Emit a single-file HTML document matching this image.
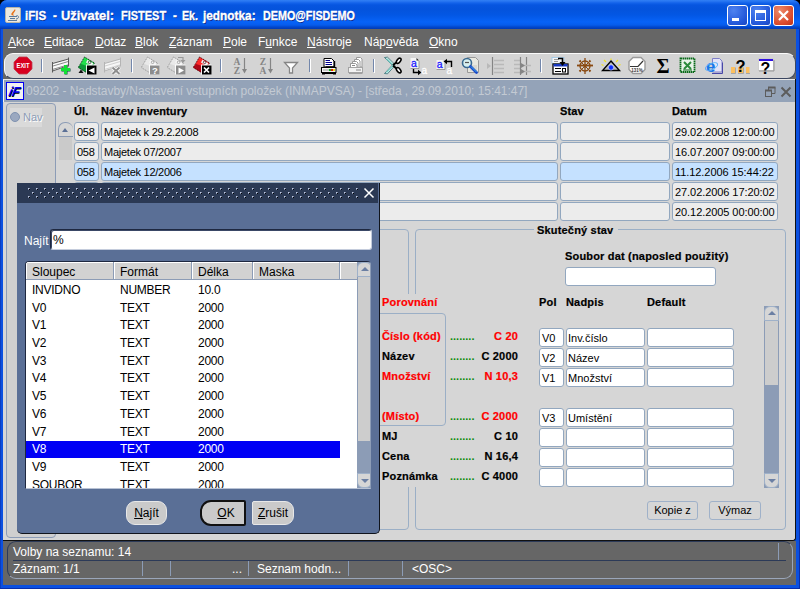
<!DOCTYPE html>
<html><head><meta charset="utf-8">
<style>
*{box-sizing:border-box;margin:0;padding:0}
html,body{width:800px;height:589px;overflow:hidden;background:#000;font-family:"Liberation Sans",sans-serif;font-size:11px;color:#000}
div,span{position:absolute;white-space:nowrap}
#win{left:0;top:0;width:800px;height:589px;background:#0b50e0;border-radius:7px 7px 0 0;overflow:hidden;box-shadow:inset -1px -1px 0 #0a2ea8,inset 1px 0 0 #0a3cc0}
#title{left:0;top:0;width:800px;height:29px;background:linear-gradient(#2f7ff5 0,#2a78f2 1px,#1262ea 3px,#0655e0 5px,#0453dc 9px,#0357e4 15px,#0763f8 22px,#065cec 25px,#0347cc 27px,#013ab4 29px);border-radius:7px 7px 0 0}
#title .tw{top:8px;color:#fff;font-weight:bold;font-size:13.5px;line-height:16px;text-shadow:1px 1px 0 #0a2a8a;-webkit-text-stroke:0.35px #fff;transform-origin:0 0}
.wb{top:5px;width:21px;height:21px;border:1px solid #fff;border-radius:3px;background:radial-gradient(circle at 30% 25%,#4f83f0,#2256d8 70%,#1a46c0)}
.wb.cl{background:radial-gradient(circle at 30% 25%,#ee8a6a,#d8482a 70%,#b83418)}
#menubar{left:3px;top:29px;width:793px;height:24px;background:#666}
#menubar span{top:6px;color:#fff;font-size:12px}
#toolbar{left:3px;top:53px;width:793px;height:26px;background:#666}
#toolbar .in{left:1px;top:0;width:792px;height:26px;background:#d4d4d4;border:1px solid #fafafa;border-right-color:#3a4660;border-bottom-color:#3a4660;border-radius:9px}
#mdi{left:3px;top:79px;width:793px;height:462px;background:#d6d6d6;border-right:1px solid #111;border-bottom:1px solid #111;border-radius:0 0 3px 0}
#mdit{left:0;top:0;width:792px;height:23px;background:#94a3b8;border-top:1px solid #e8e8e8;border-left:1px solid #f4f4f4}
#mdit .txt{left:22px;top:4px;color:#c3cad3;font-size:12px;letter-spacing:-0.04px}
#status{left:3px;top:541px;width:793px;height:44px;background:#666}
#status span{color:#fff;font-size:12px}
.hd{font-weight:bold;font-size:11px;letter-spacing:0.13px;-webkit-text-stroke:0.25px #000;margin-top:1px}
.f{background:#ececec;border:1px solid #92a7bf;border-radius:3px;height:19px;font-size:11px;line-height:19px;padding-left:2px;overflow:hidden;letter-spacing:-0.25px}
.f.sel{background:#c5e1ff}
.w{background:#fff;border:1px solid #92a7bf;border-radius:3px;height:19px;font-size:11px;line-height:19px;padding-left:2px;overflow:hidden}
.lb{font-weight:bold;font-size:11px;letter-spacing:0.18px;-webkit-text-stroke:0.2px}
.red{color:#f00}
.dots{color:#0a8a0a;font-weight:bold;font-size:11px;letter-spacing:0px}
.btn{background:#d6d6d6;border:1px solid #9fb1c9;border-radius:3px;height:19px;font-size:11px;line-height:17px;text-align:center}
#dlg{width:363px;height:351px;background:#5a6f96;border-radius:0 0 5px 5px;border-right:1px solid #10141c;border-bottom:1px solid #10141c}
#dlgt{left:0;top:0;width:361px;height:20px;background:#2b3954}
#list{left:8px;top:78px;width:346px;height:228px;background:#fff;border:1px solid #1e2840;border-right-color:#8c9cb6;border-bottom-color:#b8c2d4;border-radius:4px 4px 0 0;overflow:hidden}
#list .h{left:0;top:0;height:18px;background:#d2d2d2;border-right:1px solid #8c9cb6;border-bottom:1px solid #8c9cb6;font-size:12px;line-height:20px;padding-left:6px;box-shadow:inset 1px 1px 0 #fff}
#list .r{left:0;width:314px;height:17px;font-size:12px;letter-spacing:-0.25px}
#list .r span{top:1px}
#list .r.s{background:#0000f5;color:#fff}
.db{top:318px;height:24px;background:#cacaca;font-size:12px;line-height:22px;text-align:center;border:1px solid #e8e8e8}
</style></head><body>
<div id="win">
<div id="title"><span class="tw" style="left:25px;transform:scaleX(0.857)">iFIS</span><span class="tw" style="left:53px;transform:scaleX(0.857)">-</span><span class="tw" style="left:60.5px;transform:scaleX(0.955)">Uživatel:</span><span class="tw" style="left:120.6px;transform:scaleX(0.813)">FISTEST</span><span class="tw" style="left:173px;transform:scaleX(0.857)">-</span><span class="tw" style="left:181.6px;transform:scaleX(0.790)">Ek.</span><span class="tw" style="left:203px;transform:scaleX(0.876)">jednotka:</span><span class="tw" style="left:263px;transform:scaleX(0.798)">DEMO@FISDEMO</span><svg style="position:absolute;left:5px;top:7px" width="16" height="16" viewBox="5 7 16 16"><rect x="5.500" y="7.500" width="15" height="15" rx="1.500" fill="#ebe8e0" stroke="#b8b4a8" stroke-width="1"/><path d="M13.500 15.500c-2.500-1.500 1-4 1.500-5.500M12 15c-1.500-2 2.500-3 3-5.500" fill="none" stroke="#e8741c" stroke-width="1.100"/><path d="M9 16.500h8M10 18.500h5M8 20.500h9" stroke="#5a7a9c" stroke-width="1"/><path d="M16.500 15.500c3 0 2.500 3.500-0.500 3.500" fill="none" stroke="#5a7a9c" stroke-width="1"/></svg><div class="wb" style="left:727px"><svg width="19" height="19" style="position:absolute;left:0;top:0"><rect x="4" y="12" width="7" height="3" fill="#fff"/></svg></div><div class="wb" style="left:750px"><svg width="19" height="19" style="position:absolute;left:0;top:0"><rect x="4.500" y="5.500" width="10" height="9" fill="none" stroke="#fff" stroke-width="1"/><rect x="4" y="4" width="11" height="3" fill="#fff"/></svg></div><div class="wb cl" style="left:773px"><svg width="19" height="19" style="position:absolute;left:0;top:0"><path d="M5 5l9 9M14 5l-9 9" stroke="#fff" stroke-width="2.200"/></svg></div></div>
<div id="menubar"><span style="left:5px"><u>A</u>kce</span><span style="left:41px"><u>E</u>ditace</span><span style="left:92px"><u>D</u>otaz</span><span style="left:132px"><u>B</u>lok</span><span style="left:166px"><u>Z</u>áznam</span><span style="left:220px"><u>P</u>ole</span><span style="left:255px">F<u>u</u>nkce</span><span style="left:304px"><u>N</u>ástroje</span><span style="left:361px">Náp<u>o</u>věda</span><span style="left:426px"><u>O</u>kno</span></div>
<div id="toolbar"><div class="in"></div><svg style="position:absolute;left:10px;top:3px" width="20" height="19" viewBox="13 56 20 19"><polygon points="19,57 27,57 32,62 32,69 27,74 19,74 14,69 14,62" fill="#d8001f" stroke="#c04050" stroke-width="0.8"/><text x="23" y="68.2" text-anchor="middle" font-family="Liberation Sans,sans-serif" font-weight="bold" font-size="6.4" fill="#fff" textLength="13" lengthAdjust="spacingAndGlyphs">EXIT</text></svg><div style="left:38px;top:6px;width:1px;height:13px;background:#7387ab"></div><div style="left:39px;top:6px;width:1px;height:14px;background:#fff"></div><svg style="position:absolute;left:48px;top:3px" width="21" height="19" viewBox="51 56 21 19"><polygon points="52.5,63.5 68.5,59 68.5,65.5 52.5,71" fill="#fafafa" stroke="#5a5a5a" stroke-width="1"/><path d="M53 66l15-4.400M53 69.3l15-4.400" stroke="#8a8a8a" stroke-width="1"/><line x1="68.5" y1="57.5" x2="68.5" y2="66.5" stroke="#5a5a5a" stroke-width="1"/><line x1="52.5" y1="62" x2="52.5" y2="72.5" stroke="#5a5a5a" stroke-width="1"/><path d="M64.500 65.500h3v3h3v3h-3v3h-3v-3h-3v-3h3z" fill="#064a3a"/><path d="M64 65h3v3h3v3h-3v3h-3v-3h-3v-3h3z" fill="#12e034"/></svg><svg style="position:absolute;left:75px;top:15px" width="8" height="6" viewBox="78 68 8 6"><polygon points="78.500,73 81,69.500 83.500,73" fill="#111"/></svg><svg style="position:absolute;left:75px;top:2px" width="20" height="21" viewBox="78 55 20 21"><polygon points="84.5,57 94.5,63 88,73.5 78.3,67.5" fill="#22e04c"/><polygon points="81.2,64 87,66 91,68.5 88,73.5 78.3,67.5" fill="#0f9a3a"/><polygon points="84.5,57 94.5,63 88,73.5 78.3,67.5" fill="none" stroke="#052a10" stroke-width="0.9" stroke-dasharray="1.2 0.8"/><polygon points="87.5,59.8 93.3,63.2 91.5,66 86,62.6" fill="#f4f4f4"/><circle cx="89.6" cy="62.3" r="1.3" fill="none" stroke="#052a10" stroke-width="0.7"/><rect x="86" y="64.5" width="10.5" height="10" fill="#fff" opacity="0.9"/><rect x="87" y="65.5" width="9.5" height="9" fill="#000"/><polygon points="94.500,67.500 94.500,73.500 88.500,70.500" fill="#fff"/></svg><svg style="position:absolute;left:100px;top:3px" width="21" height="19" viewBox="103 56 21 19"><polygon points="104.5,63.5 120.5,59 120.5,65.5 104.5,71" fill="#f6f6f6" stroke="#b4b4b4" stroke-width="1"/><path d="M105 66l15-4.400M105 69.3l15-4.400" stroke="#d0d0d0" stroke-width="1"/><line x1="120.5" y1="57.5" x2="120.5" y2="66.5" stroke="#b4b4b4" stroke-width="1"/><line x1="104.5" y1="62" x2="104.5" y2="72.5" stroke="#b4b4b4" stroke-width="1"/><path d="M112.500 67.500l7 6.500M119.500 67.500l-7 6.500" stroke="#fff" stroke-width="3.400"/><path d="M112.500 67.500l7 6.500M119.500 67.500l-7 6.500" stroke="#8e8e8e" stroke-width="2"/></svg><div style="left:128px;top:6px;width:1px;height:13px;background:#7387ab"></div><div style="left:129px;top:6px;width:1px;height:14px;background:#fff"></div><svg style="position:absolute;left:138px;top:2px" width="20" height="21" viewBox="141 55 20 21"><polygon points="147.5,57 157.5,63 151,73.5 141.3,67.5" fill="#e9e9e9"/><polygon points="144.2,64 150,66 154,68.5 151,73.5 141.3,67.5" fill="#d8d8d8"/><polygon points="147.5,57 157.5,63 151,73.5 141.3,67.5" fill="none" stroke="#8f8f8f" stroke-width="0.9" stroke-dasharray="1.2 0.8"/><polygon points="150.5,59.8 156.3,63.2 154.5,66 149,62.6" fill="#f4f4f4"/><circle cx="152.6" cy="62.3" r="1.3" fill="none" stroke="#8f8f8f" stroke-width="0.7"/><rect x="149" y="64.5" width="10.5" height="10" fill="#fff" opacity="0.9"/><rect x="150" y="65.5" width="9.5" height="9" fill="#8c8c8c"/><text x="154.800" y="73.600" text-anchor="middle" font-family="Liberation Sans,sans-serif" font-weight="bold" font-size="9.500" fill="#fff">?</text></svg><svg style="position:absolute;left:164px;top:2px" width="20" height="21" viewBox="167 55 20 21"><polygon points="173.5,57 183.5,63 177,73.5 167.3,67.5" fill="#e9e9e9"/><polygon points="170.2,64 176,66 180,68.5 177,73.5 167.3,67.5" fill="#d8d8d8"/><polygon points="173.5,57 183.5,63 177,73.5 167.3,67.5" fill="none" stroke="#8f8f8f" stroke-width="0.9" stroke-dasharray="1.2 0.8"/><polygon points="176.5,59.8 182.3,63.2 180.5,66 175,62.6" fill="#f4f4f4"/><circle cx="178.6" cy="62.3" r="1.3" fill="none" stroke="#8f8f8f" stroke-width="0.7"/><rect x="175" y="64.5" width="10.5" height="10" fill="#fff" opacity="0.9"/><rect x="176" y="65.5" width="9.5" height="9" fill="#8c8c8c"/><polygon points="178.500,67.500 178.500,73.500 184,70.500" fill="#fff"/><path d="M178 57.500h5v3" fill="none" stroke="#9a9a9a" stroke-width="1.200"/><polygon points="180.500,60 185.500,60 183,63" fill="#9a9a9a"/></svg><svg style="position:absolute;left:190px;top:2px" width="20" height="21" viewBox="193 55 20 21"><polygon points="199.5,57 209.5,63 203,73.5 193.3,67.5" fill="#ff2a2a"/><polygon points="196.2,64 202,66 206,68.5 203,73.5 193.3,67.5" fill="#b00818"/><polygon points="199.5,57 209.5,63 203,73.5 193.3,67.5" fill="none" stroke="#400008" stroke-width="0.9" stroke-dasharray="1.2 0.8"/><polygon points="202.5,59.8 208.3,63.2 206.5,66 201,62.6" fill="#f4f4f4"/><circle cx="204.6" cy="62.3" r="1.3" fill="none" stroke="#400008" stroke-width="0.7"/><rect x="201" y="64.5" width="10.5" height="10" fill="#fff" opacity="0.9"/><rect x="202" y="65.5" width="9.5" height="9" fill="#000"/><path d="M204 67.500l5 5M209 67.500l-5 5" stroke="#fff" stroke-width="1.700"/></svg><div style="left:217px;top:6px;width:1px;height:13px;background:#7387ab"></div><div style="left:218px;top:6px;width:1px;height:14px;background:#fff"></div><svg style="position:absolute;left:230px;top:3px" width="16" height="19" viewBox="233 56 16 19"><text x="237" y="65" text-anchor="middle" font-family="Liberation Serif,serif" font-weight="bold" font-size="9.5" fill="#858585">A</text><text x="237" y="73.5" text-anchor="middle" font-family="Liberation Serif,serif" font-weight="bold" font-size="9.5" fill="#858585">Z</text><line x1="244.5" y1="58" x2="244.5" y2="70" stroke="#858585" stroke-width="1.2"/><polygon points="242,69 247,69 244.5,73.5" fill="#858585"/></svg><svg style="position:absolute;left:256px;top:3px" width="16" height="19" viewBox="259 56 16 19"><text x="263" y="65" text-anchor="middle" font-family="Liberation Serif,serif" font-weight="bold" font-size="9.5" fill="#858585">Z</text><text x="263" y="73.5" text-anchor="middle" font-family="Liberation Serif,serif" font-weight="bold" font-size="9.5" fill="#858585">A</text><line x1="270.5" y1="58" x2="270.5" y2="70" stroke="#858585" stroke-width="1.2"/><polygon points="268,69 273,69 270.5,73.5" fill="#858585"/></svg><svg style="position:absolute;left:280px;top:7px" width="17" height="14" viewBox="283 60 17 14"><path d="M284.5 62.5h13l-5 5.5v5h-3v-5z" fill="#fff" stroke="#858585" stroke-width="1.3"/></svg><div style="left:306px;top:6px;width:1px;height:13px;background:#7387ab"></div><div style="left:307px;top:6px;width:1px;height:14px;background:#fff"></div><svg style="position:absolute;left:317px;top:4px" width="18" height="19" viewBox="320 57 18 19"><path d="M324 58.500h7.500l2.500 2.500v6h-10z" fill="#fff" stroke="#000" stroke-width="1"/><path d="M334.500 61v6h-9" fill="none" stroke="#000" stroke-width="1.400"/><path d="M325.500 60.500h4.500M325.500 62.500h6.500M325.500 64.500h6.500" stroke="#00008c" stroke-width="1"/><rect x="321.500" y="67.500" width="14.500" height="5" fill="#f4f4f4" stroke="#000" stroke-width="1"/><rect x="323" y="69" width="6" height="2" fill="#c8c8c8"/><rect x="329" y="69" width="2" height="2" fill="#10c020"/><rect x="331" y="69" width="2" height="2" fill="#e01010"/><rect x="333" y="69" width="2" height="2" fill="#f0e010"/><rect x="322" y="72.500" width="14" height="1.500" fill="#000"/><rect x="322" y="73" width="3" height="1.500" fill="#000"/><rect x="333" y="73" width="3" height="1.500" fill="#000"/></svg><svg style="position:absolute;left:344px;top:3px" width="18" height="19" viewBox="347 56 18 19"><path d="M356.500 57.500h4l1.500 1.500v8h-5.500z" fill="#fff" stroke="#999"/><path d="M354.500 59.500h4l1.500 1.500v8h-5.500z" fill="#fff" stroke="#999"/><path d="M352.500 61.500h4l1.500 1.500v7h-5.500z" fill="#fff" stroke="#999"/><path d="M350.500 63.500h5l1.500 1.500v3h-6.500z" fill="#fff" stroke="#999"/><path d="M352 65.500h3" stroke="#888"/><rect x="348.500" y="67.500" width="14" height="5" fill="#f2f2f2" stroke="#a4a4a4"/><rect x="349" y="72.500" width="13.500" height="1.500" fill="#a0a0a0"/><path d="M356 70h5" stroke="#999" stroke-width="1.200"/></svg><div style="left:370px;top:6px;width:1px;height:13px;background:#7387ab"></div><div style="left:371px;top:6px;width:1px;height:14px;background:#fff"></div><svg style="position:absolute;left:380px;top:3px" width="20" height="19" viewBox="383 56 20 19"><path d="M384.500 57.500l3-0.300 7.500 7.300-2 1.500z" fill="#e8f6f4" stroke="#2a6a70" stroke-width="0.800"/><path d="M386.500 58.500l7 7" stroke="#7fd0c8" stroke-width="1.400"/><path d="M384.500 73.500l3 0.300 7.500-8.300-2-1z" fill="#e8f6f4" stroke="#2a6a70" stroke-width="0.800"/><path d="M386.500 72.500l7-7.500" stroke="#7fd0c8" stroke-width="1.400"/><path d="M393 65l4-3M393 65.500l4 3.500" stroke="#000" stroke-width="2"/><ellipse cx="398.700" cy="60.800" rx="1.700" ry="3" fill="#fff" stroke="#000" stroke-width="1.600" transform="rotate(38 398.700 60.800)"/><ellipse cx="398.700" cy="70.200" rx="1.700" ry="3" fill="#fff" stroke="#000" stroke-width="1.600" transform="rotate(-38 398.700 70.200)"/></svg><svg style="position:absolute;left:406px;top:3px" width="19" height="20" viewBox="409 56 19 20"><path d="M410.500 58h6l2.500 2.500v8h-8.500z" fill="#f4f4f4"/><path d="M416.500 58l2.500 2.500h-2.500z" fill="#222"/><path d="M410.500 68.500h8.500v-7.500" fill="none" stroke="#888" stroke-width="0.800"/><text x="411" y="66.500" font-family="Liberation Sans,sans-serif" font-size="10.500" fill="#1a1aff" stroke="#1a1aff" stroke-width="0.300">a</text><path d="M413.500 69v3.500h5" fill="none" stroke="#000" stroke-width="1.400"/><polygon points="418,69.700 421.500,72.500 418,75.300" fill="#000"/><text x="421.500" y="73.500" font-family="Liberation Sans,sans-serif" font-size="10" fill="#fff" stroke="#fff" stroke-width="0.300">a</text></svg><svg style="position:absolute;left:432px;top:3px" width="20" height="20" viewBox="435 56 20 20"><path d="M436.500 60h6l2.500 2.500v7h-8.500z" fill="#f4f4f4"/><path d="M436.500 69.500h8.500v-6.500" fill="none" stroke="#888" stroke-width="0.800"/><text x="436.800" y="68" font-family="Liberation Sans,sans-serif" font-size="10.500" fill="#1a1aff" stroke="#1a1aff" stroke-width="0.300">a</text><path d="M451.500 67v-5.500h-5" fill="none" stroke="#000" stroke-width="1.400"/><polygon points="447,58.700 443.500,61.500 447,64.300" fill="#000"/><text x="446.500" y="74" font-family="Liberation Sans,sans-serif" font-size="10" fill="#fff" stroke="#fff" stroke-width="0.300">a</text></svg><svg style="position:absolute;left:457px;top:3px" width="21" height="19" viewBox="460 56 21 19"><path d="M467.500 57.500h8l3 3v12h-11z" fill="#e8e8e0" stroke="#999" stroke-width="1"/><path d="M470 66h7M470 68h7M470 70h7" stroke="#c8c8c0"/><circle cx="467" cy="63" r="4.500" fill="#d8f0f0" stroke="#3a6a90" stroke-width="1.600"/><path d="M465 62.500h4" stroke="#555" stroke-width="1.200"/><path d="M470.500 66.500l6 6" stroke="#1848c8" stroke-width="2.800" stroke-linecap="round"/><path d="M471 66.500l5.500 5.500" stroke="#40b0f0" stroke-width="1"/></svg><svg style="position:absolute;left:483px;top:4px" width="19" height="18" viewBox="486 57 19 18"><polygon points="487,63 487,69 491,66" fill="#b9b9b9"/><line x1="492.500" y1="57" x2="492.500" y2="75" stroke="#858585" stroke-width="1.200"/><path d="M494 60.500h10M494 64.500h10M494 68.500h10M494 72.500h10" stroke="#b9b9b9" stroke-width="1.400"/></svg><svg style="position:absolute;left:509px;top:4px" width="20" height="18" viewBox="512 57 20 18"><path d="M514 60.500h6M514 64.500h6M514 68.500h6M514 72.500h6" stroke="#b9b9b9" stroke-width="1.400"/><line x1="520.500" y1="57" x2="520.500" y2="75" stroke="#858585" stroke-width="1.200"/><line x1="526.500" y1="57" x2="526.500" y2="75" stroke="#858585" stroke-width="1.200"/><path d="M521 65.500h10M521 71.500h10" stroke="#b9b9b9" stroke-width="1.400"/><polygon points="521,63 521,68 525,65.500" fill="#858585"/><polygon points="521,69 521,74 525,71.500" fill="#858585"/></svg><div style="left:537px;top:6px;width:1px;height:13px;background:#7387ab"></div><div style="left:538px;top:6px;width:1px;height:14px;background:#fff"></div><svg style="position:absolute;left:548px;top:3px" width="19" height="19" viewBox="551 56 19 19"><rect x="552" y="57.500" width="12" height="6" fill="#f4f4f4" stroke="#9cc8e8" stroke-width="0.8"/><path d="M554 59.500h5M554 61.500h4" stroke="#999"/><rect x="553" y="64" width="15" height="10" fill="#fff" stroke="#000" stroke-width="1.300"/><rect x="553.500" y="64" width="14" height="2.500" fill="#1838c0"/><path d="M555 68.500h6M555 71.500h6" stroke="#000" stroke-width="1.200"/><rect x="562.500" y="68.500" width="3" height="3.500" fill="none" stroke="#000" stroke-width="1"/><path d="M558 58.500h4.500v4" fill="none" stroke="#000" stroke-width="1.600"/><polygon points="559.500,62 565.500,62 562.500,66" fill="#000"/></svg><svg style="position:absolute;left:573px;top:4px" width="19" height="19" viewBox="576 57 19 19"><g stroke="#8a4a12" fill="none"><circle cx="585" cy="66" r="5" stroke-width="1.300"/><circle cx="585" cy="66" r="1.300" fill="#8a4a12" stroke-width="0.500"/><path d="M577 65.500h16" stroke-width="1.800"/><path d="M585 58v16" stroke-width="1.300"/><path d="M580 61l10 10M590 61l-10 10" stroke-width="1"/><path d="M579.500 60.500l1 1M590.500 60.500l-1 1M579.500 71.500l1-1M590.500 71.500l-1-1" stroke-width="2"/></g></svg><svg style="position:absolute;left:598px;top:5px" width="21" height="15" viewBox="601 58 21 15"><path d="M606 62l-2-2M616 62l2-2M611 60v-1.500M603.500 65.500l-2-1M618.500 65.500l2-1" stroke="#f0e020" stroke-width="1.200"/><polygon points="611,61 619.500,70.500 602.500,70.500" fill="#b8b8b8" stroke="#000" stroke-width="1.400"/><ellipse cx="611" cy="67.500" rx="2.600" ry="2.700" fill="#1030ff" stroke="#fff" stroke-width="0.5"/></svg><svg style="position:absolute;left:624px;top:3px" width="20" height="19" viewBox="627 56 20 19"><polygon points="633,57.500 641,57.500 645,61.500 645,69.500 641,73.500 633,73.500 629,69.500 629,61.500" fill="#fff" stroke="#9a9a9a" stroke-width="1.400"/><path d="M630 66.500h8l5-5.500" fill="none" stroke="#333" stroke-width="1.200"/><text x="637" y="72" text-anchor="middle" font-family="Liberation Sans,sans-serif" font-weight="bold" font-size="4.500" fill="#333">131%</text></svg><svg style="position:absolute;left:652px;top:3px" width="16" height="20" viewBox="655 56 16 20"><text x="663" y="72.800" text-anchor="middle" font-family="Liberation Serif,DejaVu Serif,serif" font-weight="bold" font-size="20" fill="#000">Σ</text></svg><svg style="position:absolute;left:676px;top:4px" width="17" height="17" viewBox="679 57 17 17"><rect x="680.500" y="58.500" width="14" height="13.500" fill="#e8f4e8" stroke="#0a6a1a" stroke-width="1.800" stroke-dasharray="1.500 0.500"/><path d="M684 62l7 7M691 62l-7 7" stroke="#2a8a3a" stroke-width="2"/><path d="M683 70h9" stroke="#0a6a1a" stroke-width="1"/></svg><svg style="position:absolute;left:702px;top:3px" width="19" height="19" viewBox="705 56 19 19"><path d="M712.500 58.500h7l2.500 2.500v11h-9.500z" fill="#e4e4f8" stroke="#8080c8" stroke-width="1"/><path d="M712 73.500h10.500v-11" fill="none" stroke="#4848a8" stroke-width="1"/><text x="706" y="71.500" font-family="Liberation Sans,sans-serif" font-weight="bold" font-size="17" fill="#1a78e8">e</text><ellipse cx="711.500" cy="66.500" rx="6.500" ry="3" fill="none" stroke="#58b0f8" stroke-width="1" transform="rotate(-25 711.500 66.500)"/></svg><svg style="position:absolute;left:727px;top:3px" width="21" height="19" viewBox="730 56 21 19"><rect x="731" y="67" width="4" height="6" fill="#fcc060"/><rect x="738" y="67" width="5" height="6" fill="#fcc060"/><rect x="746" y="67" width="3.500" height="6" fill="#fcc060"/><path d="M731 73.500h4.500v-6M738 73.500h5.500v-6M746 73.500h4" fill="none" stroke="#9a9a9a" stroke-width="0.8"/><text x="740.500" y="71.500" text-anchor="middle" font-family="Liberation Sans,sans-serif" font-weight="bold" font-size="16.500" fill="#000">?</text></svg><svg style="position:absolute;left:754px;top:4px" width="19" height="19" viewBox="757 57 19 19"><rect x="758.500" y="59" width="15" height="11.500" fill="#fff" stroke="#bbb" stroke-width="0.600"/><path d="M759 71h15v-11" fill="none" stroke="#888" stroke-width="0.800"/><rect x="759" y="59" width="14" height="2" fill="#3010e0"/><text x="765.500" y="74" text-anchor="middle" font-family="Liberation Sans,sans-serif" font-weight="bold" font-size="16" fill="#000">?</text></svg></div>
<div id="mdi">
<div id="mdit"><div class="txt">09202 - Nadstavby/Nastavení vstupních položek (INMAPVSA) - [středa , 29.09.2010; 15:41:47]</div><div style="left:2px;top:2px;width:18px;height:18px;background:#f2f2f2;border:1px solid #0000f0"></div><span style="left:5px;top:4px;font-size:13px;line-height:15px;font-weight:bold;font-style:italic;color:#0000f0;letter-spacing:-0.5px;text-shadow:0.5px 0.5px 0 #000;transform:skewX(-12deg)">iF</span><svg style="position:absolute;left:760px;top:6px" width="30" height="12" viewBox="763 85 30 12"><path d="M767.500 89v-2.500h6.500v6h-3" fill="none" stroke="#5c5c5c" stroke-width="1"/><path d="M767 86.500h7.500" stroke="#5c5c5c" stroke-width="2"/><rect x="764.500" y="89.500" width="6" height="6" fill="none" stroke="#5c5c5c" stroke-width="1"/><path d="M764 89.500h7" stroke="#5c5c5c" stroke-width="2"/><path d="M780.500 86.500l9 9M789.500 86.500l-9 9" stroke="#5c5c5c" stroke-width="2"/></svg></div>
<div style="left:3px;top:24px;width:50px;height:435px;background:#cfcfcf;border:1px solid #8c9cb6;border-radius:4px"></div>
<div style="left:7px;top:29px;width:32px;height:19px;background:#dadada"></div>
<div style="left:7px;top:33px;width:10px;height:10px;border-radius:50%;border:1px solid #7f92b0;background:#9aa8c0"></div>
<span style="left:20px;top:32px;font-size:11px;color:#8c9cb6;text-shadow:1px 1px 0 #fff">Nav</span>
<span class="hd" style="left:71px;top:25px">Úl.</span>
<span class="hd" style="left:98px;top:25px">Název inventury</span>
<span class="hd" style="left:557px;top:25px">Stav</span>
<span class="hd" style="left:669px;top:25px">Datum</span>
<div style="left:56px;top:58px;width:13px;height:23px;background:#cacaca"></div>
<div style="left:55px;top:43px;width:15px;height:15px;background:#d6d6d6;border:1px solid #8c9cb6;border-right:none;border-radius:7px 7px 0 0"></div>
<div style="left:59px;top:49px;width:0;height:0;border-left:3.5px solid transparent;border-right:3.5px solid transparent;border-bottom:4px solid #5b7096"></div>
<div class="f" style="left:71px;top:43px;width:25px">058</div>
<div class="f" style="left:98px;top:43px;width:457px">Majetek k 29.2.2008</div>
<div class="f" style="left:557px;top:43px;width:110px"></div>
<div class="f" style="left:669px;top:43px;width:106px;letter-spacing:-0.07px">29.02.2008 12:00:00</div>
<div class="f" style="left:71px;top:63px;width:25px">058</div>
<div class="f" style="left:98px;top:63px;width:457px">Majetek 07/2007</div>
<div class="f" style="left:557px;top:63px;width:110px"></div>
<div class="f" style="left:669px;top:63px;width:106px;letter-spacing:-0.07px">16.07.2007 09:00:00</div>
<div class="f sel" style="left:71px;top:83px;width:25px">058</div>
<div class="f sel" style="left:98px;top:83px;width:457px">Majetek 12/2006</div>
<div class="f sel" style="left:557px;top:83px;width:110px"></div>
<div class="f sel" style="left:669px;top:83px;width:106px;letter-spacing:-0.07px">11.12.2006 15:44:22</div>
<div class="f" style="left:71px;top:103px;width:25px">058</div>
<div class="f" style="left:98px;top:103px;width:457px"></div>
<div class="f" style="left:557px;top:103px;width:110px"></div>
<div class="f" style="left:669px;top:103px;width:106px;letter-spacing:-0.07px">27.02.2006 17:20:02</div>
<div class="f" style="left:71px;top:123px;width:25px">058</div>
<div class="f" style="left:98px;top:123px;width:457px"></div>
<div class="f" style="left:557px;top:123px;width:110px"></div>
<div class="f" style="left:669px;top:123px;width:106px;letter-spacing:-0.07px">20.12.2005 00:00:00</div>
<div style="left:14px;top:150px;width:392px;height:301px;border:1px solid #9bafc6;border-radius:4px"></div>
<div style="left:412px;top:150px;width:371px;height:301px;border:1px solid #9bafc6;border-radius:4px"></div>
<div style="left:401px;top:215px;width:16px;height:193px;background:#d6d6d6"></div>
<div style="left:531px;top:145px;width:84px;height:12px;background:#d6d6d6"></div>
<span class="lb" style="left:534px;top:145px">Skutečný stav</span>
<span class="lb" style="left:562px;top:171px">Soubor dat (naposled použitý)</span>
<div class="w" style="left:562px;top:188px;width:151px;height:19px"></div>
<span class="lb red" style="left:379px;top:217px">Porovnání</span>
<span class="lb" style="left:536px;top:217px">Pol</span>
<span class="lb" style="left:563px;top:217px">Nadpis</span>
<span class="lb" style="left:644px;top:217px">Default</span>
<div style="left:297px;top:234px;width:146px;height:113px;border:1px solid #9bafc6;border-radius:4px"></div>
<span class="lb red" style="left:379px;top:251px">Číslo (kód)</span>
<span class="dots" style="left:447px;top:251px">........</span>
<span class="lb red" style="right:277px;top:251px">C 20</span>
<div class="w" style="left:536px;top:249px;width:25px">V0</div>
<div class="w" style="left:563px;top:249px;width:79px;padding-left:1px">Inv.číslo</div>
<div class="w" style="left:644px;top:249px;width:87px"></div>
<span class="lb" style="left:379px;top:271px">Název</span>
<span class="dots" style="left:447px;top:271px">........</span>
<span class="lb" style="right:277px;top:271px">C 2000</span>
<div class="w" style="left:536px;top:269px;width:25px">V2</div>
<div class="w" style="left:563px;top:269px;width:79px;padding-left:1px">Název</div>
<div class="w" style="left:644px;top:269px;width:87px"></div>
<span class="lb red" style="left:379px;top:291px">Množství</span>
<span class="dots" style="left:447px;top:291px">........</span>
<span class="lb red" style="right:277px;top:291px">N 10,3</span>
<div class="w" style="left:536px;top:289px;width:25px">V1</div>
<div class="w" style="left:563px;top:289px;width:79px;padding-left:1px">Množství</div>
<div class="w" style="left:644px;top:289px;width:87px"></div>
<span class="lb red" style="left:379px;top:331px">(Místo)</span>
<span class="dots" style="left:447px;top:331px">........</span>
<span class="lb red" style="right:277px;top:331px">C 2000</span>
<div class="w" style="left:536px;top:329px;width:25px">V3</div>
<div class="w" style="left:563px;top:329px;width:79px;padding-left:1px">Umístění</div>
<div class="w" style="left:644px;top:329px;width:87px"></div>
<span class="lb" style="left:379px;top:351px">MJ</span>
<span class="dots" style="left:447px;top:351px">........</span>
<span class="lb" style="right:277px;top:351px">C 10</span>
<div class="w" style="left:536px;top:349px;width:25px"></div>
<div class="w" style="left:563px;top:349px;width:79px;padding-left:1px"></div>
<div class="w" style="left:644px;top:349px;width:87px"></div>
<span class="lb" style="left:379px;top:371px">Cena</span>
<span class="dots" style="left:447px;top:371px">........</span>
<span class="lb" style="right:277px;top:371px">N 16,4</span>
<div class="w" style="left:536px;top:369px;width:25px"></div>
<div class="w" style="left:563px;top:369px;width:79px;padding-left:1px"></div>
<div class="w" style="left:644px;top:369px;width:87px"></div>
<span class="lb" style="left:379px;top:391px">Poznámka</span>
<span class="dots" style="left:447px;top:391px">........</span>
<span class="lb" style="right:277px;top:391px">C 4000</span>
<div class="w" style="left:536px;top:389px;width:25px"></div>
<div class="w" style="left:563px;top:389px;width:79px;padding-left:1px"></div>
<div class="w" style="left:644px;top:389px;width:87px"></div>
<div style="left:761px;top:227px;width:15px;height:182px;background:#8c9cb6"></div>
<div style="left:762px;top:241px;width:13px;height:65px;background:#cdcdcd"></div>
<div style="left:761px;top:227px;width:15px;height:15px;background:#d6d6d6;border:1px solid #9fb1c9;border-radius:6px 6px 0 0"></div>
<div style="left:765px;top:232px;width:0;height:0;border-left:4px solid transparent;border-right:4px solid transparent;border-bottom:4px solid #6b7fa3"></div>
<div style="left:761px;top:394px;width:15px;height:15px;background:#d6d6d6;border:1px solid #9fb1c9;border-radius:0 0 6px 6px"></div>
<div style="left:765px;top:400px;width:0;height:0;border-left:4px solid transparent;border-right:4px solid transparent;border-top:4px solid #6b7fa3"></div>
<div class="btn" style="left:644px;top:422px;width:51px">Kopie z</div>
<div class="btn" style="left:706px;top:422px;width:52px">Výmaz</div>
<div id="dlg" style="left:14px;top:104px">
<div id="dlgt"><svg style="position:absolute;left:0;top:0" width="361" height="20"><path d="M11 5.5h1M19 5.5h1M27 5.5h1M35 5.5h1M43 5.5h1M51 5.5h1M59 5.5h1M67 5.5h1M75 5.5h1M83 5.5h1M91 5.5h1M99 5.5h1M107 5.5h1M115 5.5h1M123 5.5h1M131 5.5h1M139 5.5h1M147 5.5h1M155 5.5h1M163 5.5h1M171 5.5h1M179 5.5h1M187 5.5h1M195 5.5h1M203 5.5h1M211 5.5h1M219 5.5h1M227 5.5h1M235 5.5h1M243 5.5h1M251 5.5h1M259 5.5h1M267 5.5h1M275 5.5h1M283 5.5h1M291 5.5h1M299 5.5h1M307 5.5h1M315 5.5h1M323 5.5h1M331 5.5h1M339 5.5h1M15 9.5h1M23 9.5h1M31 9.5h1M39 9.5h1M47 9.5h1M55 9.5h1M63 9.5h1M71 9.5h1M79 9.5h1M87 9.5h1M95 9.5h1M103 9.5h1M111 9.5h1M119 9.5h1M127 9.5h1M135 9.5h1M143 9.5h1M151 9.5h1M159 9.5h1M167 9.5h1M175 9.5h1M183 9.5h1M191 9.5h1M199 9.5h1M207 9.5h1M215 9.5h1M223 9.5h1M231 9.5h1M239 9.5h1M247 9.5h1M255 9.5h1M263 9.5h1M271 9.5h1M279 9.5h1M287 9.5h1M295 9.5h1M303 9.5h1M311 9.5h1M319 9.5h1M327 9.5h1M335 9.5h1M11 13.5h1M19 13.5h1M27 13.5h1M35 13.5h1M43 13.5h1M51 13.5h1M59 13.5h1M67 13.5h1M75 13.5h1M83 13.5h1M91 13.5h1M99 13.5h1M107 13.5h1M115 13.5h1M123 13.5h1M131 13.5h1M139 13.5h1M147 13.5h1M155 13.5h1M163 13.5h1M171 13.5h1M179 13.5h1M187 13.5h1M195 13.5h1M203 13.5h1M211 13.5h1M219 13.5h1M227 13.5h1M235 13.5h1M243 13.5h1M251 13.5h1M259 13.5h1M267 13.5h1M275 13.5h1M283 13.5h1M291 13.5h1M299 13.5h1M307 13.5h1M315 13.5h1M323 13.5h1M331 13.5h1M339 13.5h1" stroke="#c4cce0" stroke-width="1"/><path d="M12 5.5h1M11 6.5h1M20 5.5h1M19 6.5h1M28 5.5h1M27 6.5h1M36 5.5h1M35 6.5h1M44 5.5h1M43 6.5h1M52 5.5h1M51 6.5h1M60 5.5h1M59 6.5h1M68 5.5h1M67 6.5h1M76 5.5h1M75 6.5h1M84 5.5h1M83 6.5h1M92 5.5h1M91 6.5h1M100 5.5h1M99 6.5h1M108 5.5h1M107 6.5h1M116 5.5h1M115 6.5h1M124 5.5h1M123 6.5h1M132 5.5h1M131 6.5h1M140 5.5h1M139 6.5h1M148 5.5h1M147 6.5h1M156 5.5h1M155 6.5h1M164 5.5h1M163 6.5h1M172 5.5h1M171 6.5h1M180 5.5h1M179 6.5h1M188 5.5h1M187 6.5h1M196 5.5h1M195 6.5h1M204 5.5h1M203 6.5h1M212 5.5h1M211 6.5h1M220 5.5h1M219 6.5h1M228 5.5h1M227 6.5h1M236 5.5h1M235 6.5h1M244 5.5h1M243 6.5h1M252 5.5h1M251 6.5h1M260 5.5h1M259 6.5h1M268 5.5h1M267 6.5h1M276 5.5h1M275 6.5h1M284 5.5h1M283 6.5h1M292 5.5h1M291 6.5h1M300 5.5h1M299 6.5h1M308 5.5h1M307 6.5h1M316 5.5h1M315 6.5h1M324 5.5h1M323 6.5h1M332 5.5h1M331 6.5h1M340 5.5h1M339 6.5h1M16 9.5h1M15 10.5h1M24 9.5h1M23 10.5h1M32 9.5h1M31 10.5h1M40 9.5h1M39 10.5h1M48 9.5h1M47 10.5h1M56 9.5h1M55 10.5h1M64 9.5h1M63 10.5h1M72 9.5h1M71 10.5h1M80 9.5h1M79 10.5h1M88 9.5h1M87 10.5h1M96 9.5h1M95 10.5h1M104 9.5h1M103 10.5h1M112 9.5h1M111 10.5h1M120 9.5h1M119 10.5h1M128 9.5h1M127 10.5h1M136 9.5h1M135 10.5h1M144 9.5h1M143 10.5h1M152 9.5h1M151 10.5h1M160 9.5h1M159 10.5h1M168 9.5h1M167 10.5h1M176 9.5h1M175 10.5h1M184 9.5h1M183 10.5h1M192 9.5h1M191 10.5h1M200 9.5h1M199 10.5h1M208 9.5h1M207 10.5h1M216 9.5h1M215 10.5h1M224 9.5h1M223 10.5h1M232 9.5h1M231 10.5h1M240 9.5h1M239 10.5h1M248 9.5h1M247 10.5h1M256 9.5h1M255 10.5h1M264 9.5h1M263 10.5h1M272 9.5h1M271 10.5h1M280 9.5h1M279 10.5h1M288 9.5h1M287 10.5h1M296 9.5h1M295 10.5h1M304 9.5h1M303 10.5h1M312 9.5h1M311 10.5h1M320 9.5h1M319 10.5h1M328 9.5h1M327 10.5h1M336 9.5h1M335 10.5h1M12 13.5h1M11 14.5h1M20 13.5h1M19 14.5h1M28 13.5h1M27 14.5h1M36 13.5h1M35 14.5h1M44 13.5h1M43 14.5h1M52 13.5h1M51 14.5h1M60 13.5h1M59 14.5h1M68 13.5h1M67 14.5h1M76 13.5h1M75 14.5h1M84 13.5h1M83 14.5h1M92 13.5h1M91 14.5h1M100 13.5h1M99 14.5h1M108 13.5h1M107 14.5h1M116 13.5h1M115 14.5h1M124 13.5h1M123 14.5h1M132 13.5h1M131 14.5h1M140 13.5h1M139 14.5h1M148 13.5h1M147 14.5h1M156 13.5h1M155 14.5h1M164 13.5h1M163 14.5h1M172 13.5h1M171 14.5h1M180 13.5h1M179 14.5h1M188 13.5h1M187 14.5h1M196 13.5h1M195 14.5h1M204 13.5h1M203 14.5h1M212 13.5h1M211 14.5h1M220 13.5h1M219 14.5h1M228 13.5h1M227 14.5h1M236 13.5h1M235 14.5h1M244 13.5h1M243 14.5h1M252 13.5h1M251 14.5h1M260 13.5h1M259 14.5h1M268 13.5h1M267 14.5h1M276 13.5h1M275 14.5h1M284 13.5h1M283 14.5h1M292 13.5h1M291 14.5h1M300 13.5h1M299 14.5h1M308 13.5h1M307 14.5h1M316 13.5h1M315 14.5h1M324 13.5h1M323 14.5h1M332 13.5h1M331 14.5h1M340 13.5h1M339 14.5h1" stroke="#7f8cab" stroke-width="1"/><path d="M12 6.5h1M20 6.5h1M28 6.5h1M36 6.5h1M44 6.5h1M52 6.5h1M60 6.5h1M68 6.5h1M76 6.5h1M84 6.5h1M92 6.5h1M100 6.5h1M108 6.5h1M116 6.5h1M124 6.5h1M132 6.5h1M140 6.5h1M148 6.5h1M156 6.5h1M164 6.5h1M172 6.5h1M180 6.5h1M188 6.5h1M196 6.5h1M204 6.5h1M212 6.5h1M220 6.5h1M228 6.5h1M236 6.5h1M244 6.5h1M252 6.5h1M260 6.5h1M268 6.5h1M276 6.5h1M284 6.5h1M292 6.5h1M300 6.5h1M308 6.5h1M316 6.5h1M324 6.5h1M332 6.5h1M340 6.5h1M16 10.5h1M24 10.5h1M32 10.5h1M40 10.5h1M48 10.5h1M56 10.5h1M64 10.5h1M72 10.5h1M80 10.5h1M88 10.5h1M96 10.5h1M104 10.5h1M112 10.5h1M120 10.5h1M128 10.5h1M136 10.5h1M144 10.5h1M152 10.5h1M160 10.5h1M168 10.5h1M176 10.5h1M184 10.5h1M192 10.5h1M200 10.5h1M208 10.5h1M216 10.5h1M224 10.5h1M232 10.5h1M240 10.5h1M248 10.5h1M256 10.5h1M264 10.5h1M272 10.5h1M280 10.5h1M288 10.5h1M296 10.5h1M304 10.5h1M312 10.5h1M320 10.5h1M328 10.5h1M336 10.5h1M12 14.5h1M20 14.5h1M28 14.5h1M36 14.5h1M44 14.5h1M52 14.5h1M60 14.5h1M68 14.5h1M76 14.5h1M84 14.5h1M92 14.5h1M100 14.5h1M108 14.5h1M116 14.5h1M124 14.5h1M132 14.5h1M140 14.5h1M148 14.5h1M156 14.5h1M164 14.5h1M172 14.5h1M180 14.5h1M188 14.5h1M196 14.5h1M204 14.5h1M212 14.5h1M220 14.5h1M228 14.5h1M236 14.5h1M244 14.5h1M252 14.5h1M260 14.5h1M268 14.5h1M276 14.5h1M284 14.5h1M292 14.5h1M300 14.5h1M308 14.5h1M316 14.5h1M324 14.5h1M332 14.5h1M340 14.5h1" stroke="#000" stroke-width="1"/><path d="M347.500 5.500l9 9M356.500 5.500l-9 9" stroke="#fff" stroke-width="1.500"/></svg></div>
<span style="left:7px;top:51px;font-size:12px;color:#fff">Najít</span>
<div style="left:33px;top:46px;width:322px;height:21px;background:#fff;border:1px solid #1e2840;border-right-color:#c4ccdc;border-bottom-color:#c4ccdc;border-radius:3px;box-shadow:inset 1px 1px 0 #3a4866;font-size:12px;line-height:21px;padding-left:2px">%</div>
<div id="list">
<div class="h" style="left:0px;width:88px">Sloupec</div>
<div class="h" style="left:88px;width:78px">Formát</div>
<div class="h" style="left:166px;width:61px">Délka</div>
<div class="h" style="left:227px;width:87px">Maska</div>
<div class="h" style="left:314px;width:18px"></div>
<div class="r" style="top:20px"><span style="left:6px">INVIDNO</span><span style="left:94px">NUMBER</span><span style="left:172px">10.0</span></div>
<div class="r" style="top:38px"><span style="left:6px">V0</span><span style="left:94px">TEXT</span><span style="left:172px">2000</span></div>
<div class="r" style="top:55px"><span style="left:6px">V1</span><span style="left:94px">TEXT</span><span style="left:172px">2000</span></div>
<div class="r" style="top:73px"><span style="left:6px">V2</span><span style="left:94px">TEXT</span><span style="left:172px">2000</span></div>
<div class="r" style="top:91px"><span style="left:6px">V3</span><span style="left:94px">TEXT</span><span style="left:172px">2000</span></div>
<div class="r" style="top:108px"><span style="left:6px">V4</span><span style="left:94px">TEXT</span><span style="left:172px">2000</span></div>
<div class="r" style="top:126px"><span style="left:6px">V5</span><span style="left:94px">TEXT</span><span style="left:172px">2000</span></div>
<div class="r" style="top:144px"><span style="left:6px">V6</span><span style="left:94px">TEXT</span><span style="left:172px">2000</span></div>
<div class="r" style="top:162px"><span style="left:6px">V7</span><span style="left:94px">TEXT</span><span style="left:172px">2000</span></div>
<div class="r s" style="top:179px"><span style="left:6px">V8</span><span style="left:94px">TEXT</span><span style="left:172px">2000</span></div>
<div class="r" style="top:197px"><span style="left:6px">V9</span><span style="left:94px">TEXT</span><span style="left:172px">2000</span></div>
<div class="r" style="top:215px"><span style="left:6px">SOUBOR</span><span style="left:94px">TEXT</span><span style="left:172px">2000</span></div>
<div style="left:331px;top:0;width:15px;height:228px;background:#8c9cb6"></div>
<div style="left:332px;top:14px;width:13px;height:165px;background:#cdcdcd"></div>
<div style="left:331px;top:0;width:15px;height:15px;background:#d6d6d6;border:1px solid #9fb1c9;border-radius:6px 6px 0 0"></div>
<div style="left:335px;top:5px;width:0;height:0;border-left:4px solid transparent;border-right:4px solid transparent;border-bottom:4px solid #6b7fa3"></div>
<div style="left:331px;top:211px;width:15px;height:15px;background:#d6d6d6;border:1px solid #9fb1c9;border-radius:0 0 6px 6px"></div>
<div style="left:335px;top:217px;width:0;height:0;border-left:4px solid transparent;border-right:4px solid transparent;border-top:4px solid #6b7fa3"></div>
</div>
<div class="db" style="left:109px;width:41px;border-radius:9px"><u>N</u>ajít</div>
<div class="db" style="left:183px;width:46px;height:26px;top:317px;border:2px solid #111;border-radius:11px 2px 2px 11px;line-height:22px;padding-left:6px"><u>O</u>K</div>
<div class="db" style="left:235px;width:42px;border-radius:2px 9px 9px 2px"><u>Z</u>rušit</div>
</div>
</div>
<div id="status">
<div style="left:4px;top:0px;width:786px;height:38px;border:1px solid #2c3a58;border-right-color:#9aa6ba;border-bottom-color:#9aa6ba;border-radius:9px"></div>
<div style="left:10px;top:19px;width:773px;height:1px;background:#2c3a58"></div>
<div style="left:139px;top:20px;width:1px;height:15px;background:#8c9cb6"></div>
<div style="left:167px;top:20px;width:1px;height:15px;background:#8c9cb6"></div>
<div style="left:245px;top:20px;width:1px;height:15px;background:#8c9cb6"></div>
<div style="left:345px;top:20px;width:1px;height:15px;background:#8c9cb6"></div>
<div style="left:399px;top:20px;width:1px;height:15px;background:#8c9cb6"></div>
<div style="left:775px;top:2px;width:1px;height:17px;background:#8c9cb6"></div>
<span style="left:10px;top:4px">Volby na seznamu: 14</span>
<span style="left:10px;top:21px">Záznam: 1/1</span>
<span style="left:229px;top:21px">...</span>
<span style="left:254px;top:21px">Seznam hodn...</span>
<span style="left:409px;top:21px">&lt;OSC&gt;</span>
</div>
</div>
</body></html>
